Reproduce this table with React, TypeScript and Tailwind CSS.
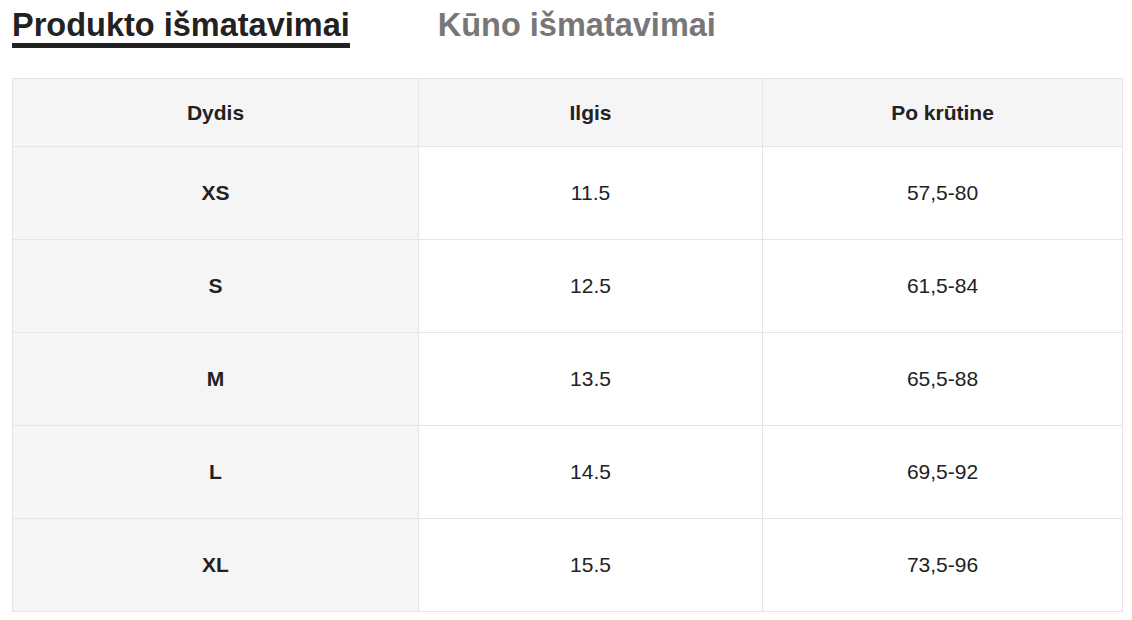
import React from 'react'

const rows = [
  { size: 'XS', length: '11.5', chest: '57,5-80' },
  { size: 'S', length: '12.5', chest: '61,5-84' },
  { size: 'M', length: '13.5', chest: '65,5-88' },
  { size: 'L', length: '14.5', chest: '69,5-92' },
  { size: 'XL', length: '15.5', chest: '73,5-96' },
]

export default function App() {
  return (
    <div className="min-h-screen bg-white px-3 text-[#222]" style={{ fontFamily: '"Liberation Sans", Arial, sans-serif' }}>
      {/* Tabs */}
      <div className="flex items-start h-[78px] pt-[7px]">
        <button className="text-[32.5px] font-bold leading-[36px] text-[#222] border-b-[5px] border-[#222]">
          Produkto išmatavimai
        </button>
        <button className="ml-[88px] text-[32.5px] font-bold leading-[36px] text-[#777]">
          Kūno išmatavimai
        </button>
      </div>

      {/* Size table */}
      <table className="w-[1110px] table-fixed border-collapse text-center text-[21px]">
        <colgroup>
          <col className="w-[406px]" />
          <col className="w-[344px]" />
          <col className="w-[360px]" />
        </colgroup>
        <thead>
          <tr className="h-[68px] bg-[#f5f5f5]">
            <th className="border border-[#e5e5e5] font-bold">Dydis</th>
            <th className="border border-[#e5e5e5] font-bold">Ilgis</th>
            <th className="border border-[#e5e5e5] font-bold">Po krūtine</th>
          </tr>
        </thead>
        <tbody>
          {rows.map((r) => (
            <tr key={r.size} className="h-[93px]">
              <td className="border border-[#e5e5e5] bg-[#f5f5f5] font-bold">{r.size}</td>
              <td className="border border-[#e5e5e5]">{r.length}</td>
              <td className="border border-[#e5e5e5]">{r.chest}</td>
            </tr>
          ))}
        </tbody>
      </table>
    </div>
  )
}
